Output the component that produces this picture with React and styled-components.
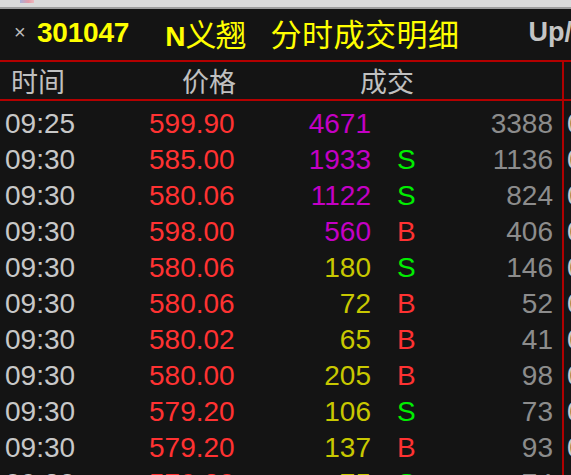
import React from "react";
import styled, { createGlobalStyle } from "styled-components";

const GlobalStyle = createGlobalStyle`
  html, body {
    margin: 0;
    padding: 0;
    background: #141414;
    overflow: hidden;
  }
  body {
    font-family: "Liberation Sans", Arial, sans-serif;
  }
`;

const ticks = [
  { time: "09:25", price: "599.90", vol: 4671, side: "", num: 3388 },
  { time: "09:30", price: "585.00", vol: 1933, side: "S", num: 1136 },
  { time: "09:30", price: "580.06", vol: 1122, side: "S", num: 824 },
  { time: "09:30", price: "598.00", vol: 560, side: "B", num: 406 },
  { time: "09:30", price: "580.06", vol: 180, side: "S", num: 146 },
  { time: "09:30", price: "580.06", vol: 72, side: "B", num: 52 },
  { time: "09:30", price: "580.02", vol: 65, side: "B", num: 41 },
  { time: "09:30", price: "580.00", vol: 205, side: "B", num: 98 },
  { time: "09:30", price: "579.20", vol: 106, side: "S", num: 73 },
  { time: "09:30", price: "579.20", vol: 137, side: "B", num: 93 },
  { time: "09:30", price: "579.20", vol: 75, side: "S", num: 74 },
];

class App extends React.Component {
  render() {
    return (
      <Screen>
        <GlobalStyle />
        <WindowStrip>
          <StripIcon />
        </WindowStrip>

        <TitleBar>
          <Close>×</Close>
          <Code>301047</Code>
          <Name>
            <b>N</b>义翘
          </Name>
          <Caption>分时成交明细</Caption>
          <Extra>Up/Down</Extra>
        </TitleBar>

        <Body>
          <Panel>
            <HeaderRow>
              <HeadCell $w={171}>时间</HeadCell>
              <HeadCell $w={178}>价格</HeadCell>
              <HeadCell>成交</HeadCell>
            </HeaderRow>

            <Rows>
              {ticks.map((t, i) => (
                <Row key={i}>
                  <Time>{t.time}</Time>
                  <Price>{t.price}</Price>
                  <Volume $big={t.vol >= 500}>{t.vol}</Volume>
                  <Side $side={t.side}>{t.side}</Side>
                  <Count>{t.num}</Count>
                </Row>
              ))}
            </Rows>
          </Panel>

          <Overflow>
            <OverflowHead />
            <Rows>
              {ticks.map((t, i) => (
                <OverflowRow key={i}>09:30</OverflowRow>
              ))}
            </Rows>
          </Overflow>
        </Body>
      </Screen>
    );
  }
}

const Screen = styled.div`
  width: 571px;
  height: 475px;
  overflow: hidden;
  background: #141414;
`;

const WindowStrip = styled.div`
  height: 7px;
  background: #dadada;
  border-bottom: 2px solid #9c9c9c;
  display: flex;
  padding-left: 20px;
`;

const StripIcon = styled.span`
  width: 14px;
  height: 3px;
  background: linear-gradient(90deg, #9aa6d8, #e88a9a 60%, #f0b0b8);
  opacity: 0.8;
`;

const TitleBar = styled.div`
  height: 53px;
  display: flex;
  align-items: center;
  padding: 0 0 4px 14px;
  box-sizing: border-box;
  white-space: nowrap;
  overflow: hidden;
  border-bottom: 2px solid #b40000;
`;

const Close = styled.span`
  color: #bcbcbc;
  font-size: 20px;
  width: 23px;
  flex-shrink: 0;
`;

const Code = styled.span`
  color: #ffff00;
  font-weight: bold;
  font-size: 28px;
  letter-spacing: -0.2px;
  flex-shrink: 0;
`;

const Name = styled.span`
  color: #ffff00;
  margin-left: 36px;
  font-family: "Liberation Sans", "Noto Sans CJK SC", sans-serif;
  font-size: 31px;
  letter-spacing: -1px;
  flex-shrink: 0;

  b {
    font-size: 28px;
    margin-right: 1px;
  }
`;

const Caption = styled.span`
  color: #ffff00;
  margin-left: 25px;
  font-family: "Noto Sans CJK SC", sans-serif;
  font-size: 31px;
  letter-spacing: 0.5px;
  flex-shrink: 0;
`;

const Extra = styled.span`
  color: #c4c4c4;
  margin-left: 69px;
  font-size: 27px;
  font-weight: bold;
  flex-shrink: 0;
`;

const Body = styled.div`
  display: flex;
`;

const Panel = styled.div`
  width: 562px;
  flex-shrink: 0;
  border-right: 2px solid #b00000;
`;

const HeaderRow = styled.div`
  height: 37px;
  display: flex;
  align-items: center;
  padding-left: 11px;
  border-bottom: 2px solid #b40000;
`;

const HeadCell = styled.div`
  width: ${(p) => (p.$w ? `${p.$w}px` : "auto")};
  color: #c0c0c0;
  font-family: "Noto Sans CJK SC", sans-serif;
  font-size: 27px;
  line-height: 1;
`;

const Rows = styled.div`
  padding-top: 5px;
`;

const Row = styled.div`
  height: 36px;
  display: grid;
  grid-template-columns: 144px 96px 126px 26px 34px 1fr;
  align-items: center;
  padding-left: 5px;
  padding-right: 9px;
  font-size: 28px;
  line-height: 1;
`;

const Time = styled.span`
  color: #c8c8c8;
`;

const Price = styled.span`
  color: #ff3232;
`;

const Volume = styled.span`
  grid-column: 3;
  text-align: right;
  color: ${(p) => (p.$big ? "#c400c4" : "#c8c800")};
`;

const Side = styled.span`
  grid-column: 5;
  color: ${(p) => (p.$side === "S" ? "#00ee00" : "#ff3232")};
`;

const Count = styled.span`
  grid-column: 6;
  text-align: right;
  color: #8c8c8c;
`;

const Overflow = styled.div`
  flex: 1;
  overflow: hidden;
`;

const OverflowHead = styled.div`
  height: 37px;
  border-bottom: 2px solid #b40000;
`;

const OverflowRow = styled.div`
  height: 36px;
  display: flex;
  align-items: center;
  padding-left: 3px;
  color: #c8c8c8;
  font-size: 28px;
  line-height: 1;
  white-space: nowrap;
`;

export default App;
